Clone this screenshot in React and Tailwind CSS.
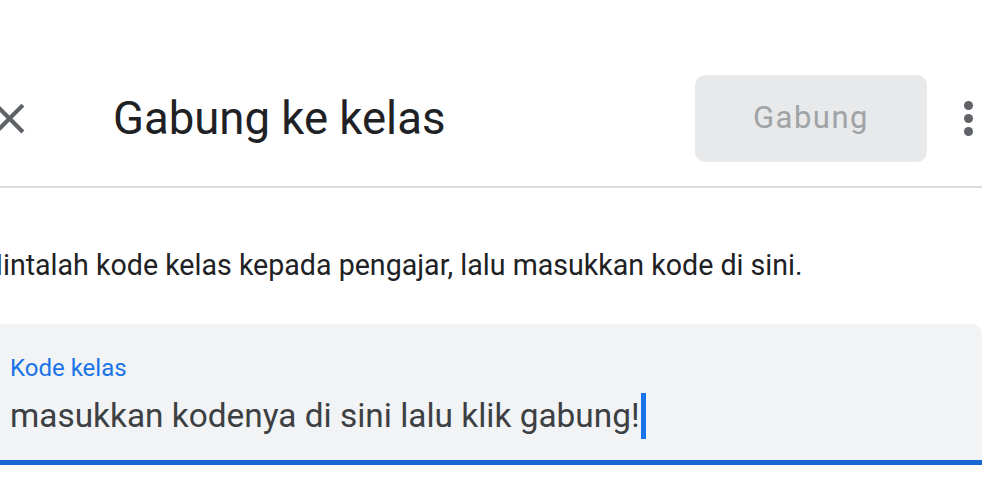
export default function App() {
  return (
    <div className="h-[477px] w-[982px] overflow-hidden bg-white font-['Roboto',sans-serif]">
      <header className="border-b-2 border-[#dadce0] pt-[75px] pb-[24px]">
        <div className="flex h-[87px] items-center">
          <button className="ml-[-16px] flex h-[51px] w-[51px] items-center justify-center text-[#5f6368]">
            <svg width="51" height="51" viewBox="0 0 24 24" fill="currentColor">
              <path d="M19 6.41L17.59 5 12 10.59 6.41 5 5 6.41 10.59 12 5 17.59 6.41 19 12 13.41 17.59 19 19 17.59 13.41 12z" />
            </svg>
          </button>
          <h1 className="ml-[78px] text-[45.5px] leading-none text-[#202124]">Gabung ke kelas</h1>
          <div className="flex-1" />
          <button className="h-[87px] w-[232px] rounded-[10px] bg-[#e8e9ea] text-[31px] tracking-[1.5px] text-[#a0a3a6]">
            Gabung
          </button>
          <div className="mr-[9px] ml-[37px] flex flex-col gap-[4px]">
            <span className="h-[9px] w-[9px] rounded-full bg-[#5f6368]" />
            <span className="h-[9px] w-[9px] rounded-full bg-[#5f6368]" />
            <span className="h-[9px] w-[9px] rounded-full bg-[#5f6368]" />
          </div>
        </div>
      </header>

      <div className="ml-[-22px]">
        <p className="mt-[60px] text-[28.6px] leading-[34px] text-[#202124]">
          Mintalah kode kelas kepada pengajar, lalu masukkan kode di sini.
        </p>
        <div className="mt-[42px] h-[141px] rounded-tr-[10px] border-b-[5px] border-[#1967d2] bg-[#f1f3f4] pl-[32px] pt-[29px]">
          <div className="text-[24px] leading-[30px] text-[#1a73e8]">Kode kelas</div>
          <div className="mt-[10px] flex items-center text-[33.4px] leading-[42px] text-[#3c4043]">
            <span>masukkan kodenya di sini lalu klik gabung!</span>
            <span className="ml-[1px] h-[46px] w-[5px] bg-[#1a73e8]" />
          </div>
        </div>
      </div>
    </div>
  );
}
